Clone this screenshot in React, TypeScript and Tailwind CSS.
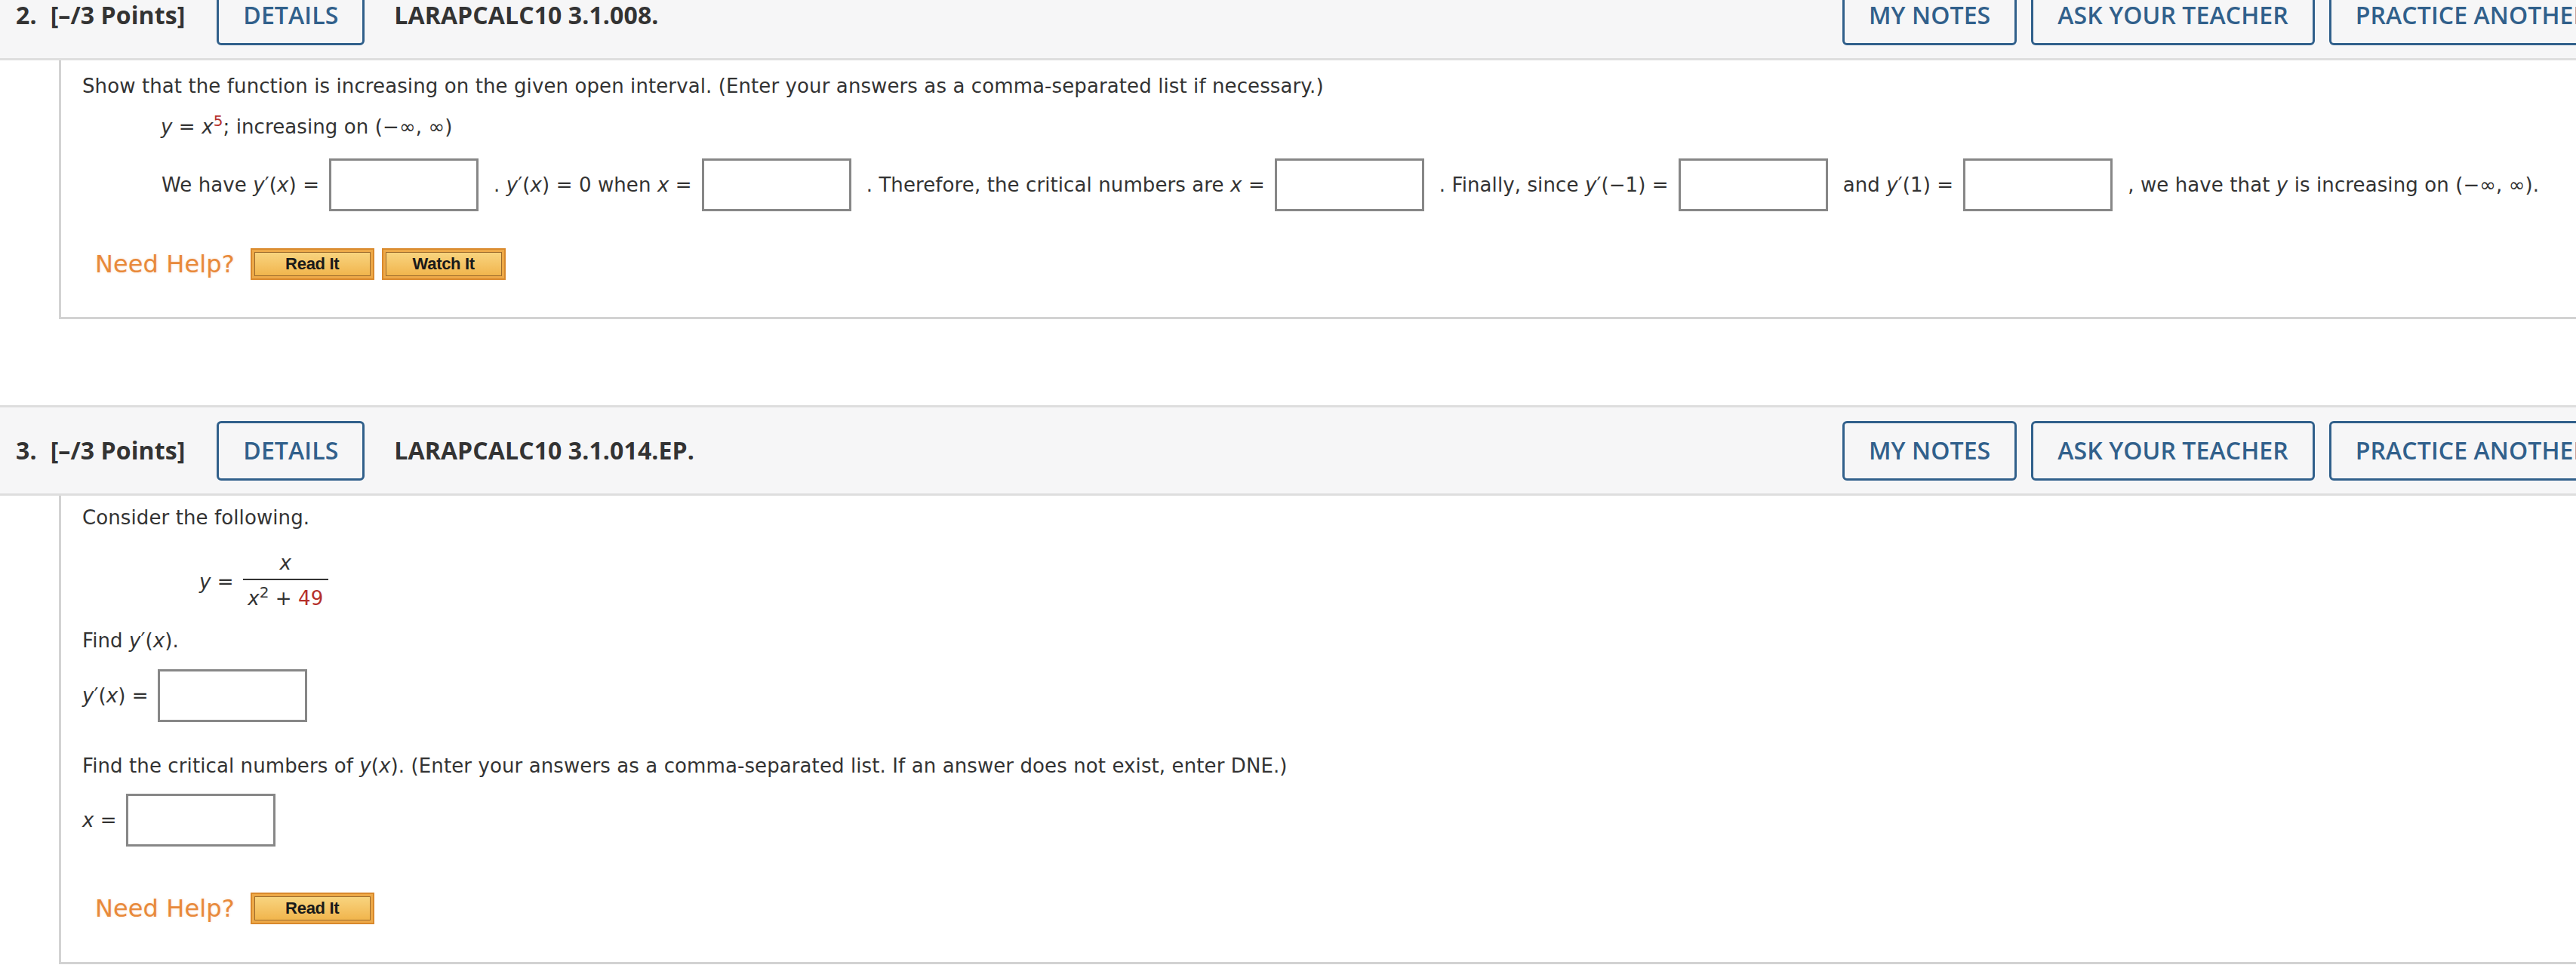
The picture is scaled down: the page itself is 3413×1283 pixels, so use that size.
import React from "react";

const BLUE = "text-[#31608b]";

function V({ children }: { children: React.ReactNode }) {
  return <i className="italic">{children}</i>;
}

function Box() {
  return <input type="text" className="h-[70px] w-[198px] shrink-0 border-[3px] border-[#878787] bg-white outline-none" />;
}

function HelpButton({ label }: { label: string }) {
  return (
    <div className="h-[42px] w-[164px] border-2 border-[#d9892c] bg-[#eda948] p-[3px]">
      <div className="flex h-full w-full items-center justify-center border border-[#9b6a2c] bg-gradient-to-b from-[#f8d47e] to-[#f1b54c] font-['Liberation_Sans',Arial,sans-serif] text-[22px] font-bold leading-none tracking-[-0.3px] text-[#1a1a1a]">
        {label}
      </div>
    </div>
  );
}

function NeedHelp({ watch }: { watch?: boolean }) {
  return (
    <div className="ml-[17px] flex h-[42px] items-center">
      <span className="mr-[21px] font-['DejaVu_Sans',Verdana,sans-serif] text-[32px] leading-none text-[#e8893a] [text-shadow:0_0_3px_rgba(232,137,58,0.3)]">
        Need Help?
      </span>
      <HelpButton label="Read It" />
      {watch && (
        <div className="ml-[10px]">
          <HelpButton label="Watch It" />
        </div>
      )}
    </div>
  );
}

function HeaderButton({ label, className = "" }: { label: string; className?: string }) {
  return (
    <div className={`flex h-[79px] shrink-0 items-center whitespace-nowrap rounded-[6px] border-[3px] border-[#31608b] px-[32px] text-[32px] font-semibold leading-[32px] ${BLUE} ${className}`}>
      {label}
    </div>
  );
}

function QuestionHeader({ num, code }: { num: string; code: string }) {
  return (
    <div className="flex h-[120px] w-[3700px] items-center border-y-[3px] border-[#dedede] bg-[#f6f6f7] pl-[21px] font-['Open_Sans',sans-serif] leading-[32px]">
      <div className="flex w-[2420px] shrink-0 items-center">
        <span className="text-[32px] font-bold text-[#333]">{num}.</span>
        <span className="ml-[18px] text-[32px] font-bold text-[#333]">[–/3 Points]</span>
        <HeaderButton label="DETAILS" className="ml-[42px]" />
        <span className="ml-[39px] text-[32px] font-bold text-[#333]">{code}</span>
      </div>
      <div className="flex shrink-0 items-center gap-[19px]">
        <HeaderButton label="MY NOTES" />
        <HeaderButton label="ASK YOUR TEACHER" />
        <HeaderButton label="PRACTICE ANOTHER" />
      </div>
    </div>
  );
}

const RED = "text-[#b5302b]";

export default function App() {
  return (
    <div className="h-[1283px] w-[3413px] overflow-hidden bg-white font-['DejaVu_Sans',Verdana,sans-serif] text-[26px] tracking-[0.1px] text-[#333]">
      <div className="-mt-[40px]">
        <QuestionHeader num="2" code="LARAPCALC10 3.1.008." />
        <div className="ml-[78px] border-b-[3px] border-l-[3px] border-[#d2d2d2] pb-[49px] pl-[28px] pt-[16px] whitespace-nowrap">
          <p className="leading-[36px]">
            Show that the function is increasing on the given open interval. (Enter your answers as a comma-separated list if necessary.)
          </p>
          <p className="ml-[104px] mt-[18px] leading-[36px]">
            <V>y</V> = <V>x</V>
            <span className={`relative bottom-[10px] text-[20px] ${RED}`}>5</span>; increasing on (−∞, ∞)
          </p>
          <div className="ml-[105px] mt-[22px] flex items-center leading-[36px]">
            <span>
              We have <V>y</V>′(<V>x</V>) =
            </span>
            <div className="ml-[13px] mr-[20px]"><Box /></div>
            <span>
              . <V>y</V>′(<V>x</V>) = 0 when <V>x</V> =
            </span>
            <div className="ml-[13px] mr-[20px]"><Box /></div>
            <span>
              . Therefore, the critical numbers are <V>x</V> =
            </span>
            <div className="ml-[13px] mr-[20px]"><Box /></div>
            <span>
              . Finally, since <V>y</V>′(−1) =
            </span>
            <div className="ml-[13px] mr-[20px]"><Box /></div>
            <span>
              and <V>y</V>′(1) =
            </span>
            <div className="ml-[13px] mr-[20px]"><Box /></div>
            <span>
              , we have that <V>y</V> is increasing on (−∞, ∞).
            </span>
          </div>
          <div className="mt-[49px]">
            <NeedHelp watch />
          </div>
        </div>

        <div className="mt-[114px]">
          <QuestionHeader num="3" code="LARAPCALC10 3.1.014.EP." />
          <div className="ml-[78px] border-b-[3px] border-l-[3px] border-[#d2d2d2] pb-[50px] pl-[28px] pt-[11px] whitespace-nowrap">
            <p className="leading-[36px]">Consider the following.</p>
            <div className="ml-[155px] mt-[27px] flex items-center">
              <span className="leading-[36px]">
                <V>y</V> =
              </span>
              <div className="ml-[12px] flex w-[113px] flex-col items-center">
                <div className="pb-[6px] leading-[30px]">
                  <V>x</V>
                </div>
                <div className="h-[2px] w-full bg-[#333]" />
                <div className="pt-[9px] leading-[30px]">
                  <V>x</V>
                  <span className="relative bottom-[10px] text-[20px]">2</span> + <span className={RED}>49</span>
                </div>
              </div>
            </div>
            <p className="mt-[21px] leading-[36px]">
              Find <V>y</V>′(<V>x</V>).
            </p>
            <div className="mt-[20px] flex items-center leading-[36px]">
              <span>
                <V>y</V>′(<V>x</V>) =
              </span>
              <div className="ml-[12px]"><Box /></div>
            </div>
            <p className="mt-[40px] leading-[36px]">
              Find the critical numbers of <V>y</V>(<V>x</V>). (Enter your answers as a comma-separated list. If an answer does not exist, enter DNE.)
            </p>
            <div className="mt-[19px] flex items-center leading-[36px]">
              <span>
                <V>x</V> =
              </span>
              <div className="ml-[12px]"><Box /></div>
            </div>
            <div className="mt-[61px]">
              <NeedHelp />
            </div>
          </div>
        </div>
      </div>
    </div>
  );
}
